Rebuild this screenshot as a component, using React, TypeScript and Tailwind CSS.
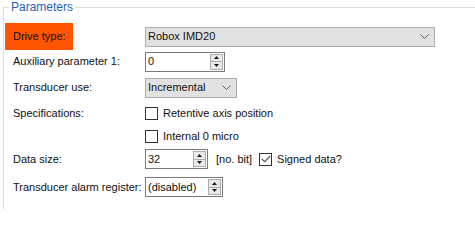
import React from "react";

function Chevron() {
  return (
    <svg width="9" height="5" viewBox="0 0 9 5" className="shrink-0">
      <path d="M0.5 0.5 L4.5 4.5 L8.5 0.5" fill="none" stroke="#606060" strokeWidth="1" />
    </svg>
  );
}

function Combo({ value, width }: { value: string; width: string }) {
  return (
    <div
      className={`flex h-[20px] items-center justify-between border border-[#adadad] bg-[#e1e1e1] pl-[2px] pr-[5px] ${width}`}
    >
      <span>{value}</span>
      <Chevron />
    </div>
  );
}

function Spin({ value, width }: { value: string; width: string }) {
  return (
    <div
      className={`flex h-[20px] items-center justify-between border border-[#7a7a7a] bg-white pl-[2px] pr-[1px] ${width}`}
    >
      <span>{value}</span>
      <div className="flex h-[16px] w-[13px] flex-col border border-[#adadad] bg-[#e9e9e9]">
        <div className="flex flex-1 items-center justify-center border-b border-[#adadad]">
          <svg width="5" height="3" viewBox="0 0 5 3">
            <path d="M2.5 0 L5 3 L0 3 Z" fill="#1a1a1a" />
          </svg>
        </div>
        <div className="flex flex-1 items-center justify-center">
          <svg width="5" height="3" viewBox="0 0 5 3">
            <path d="M0 0 L5 0 L2.5 3 Z" fill="#1a1a1a" />
          </svg>
        </div>
      </div>
    </div>
  );
}

function Check({ checked, label }: { checked?: boolean; label: string }) {
  return (
    <div className="flex items-center gap-[5px]">
      <div className="flex h-[13px] w-[13px] items-center justify-center border border-[#333333] bg-white">
        {checked && (
          <svg width="10" height="8" viewBox="0 0 10 8">
            <path d="M0.8 3.8 L3.6 6.6 L9.2 1" fill="none" stroke="#555555" strokeWidth="1.2" />
          </svg>
        )}
      </div>
      <span>{label}</span>
    </div>
  );
}

function Row({ label, h, children }: { label: string; h: string; children: React.ReactNode }) {
  return (
    <div className={`flex items-center ${h}`}>
      <div className="w-[141px] pl-[9px]">{label}</div>
      {children}
    </div>
  );
}

export default function App() {
  return (
    <div className="h-[209px] w-[475px] overflow-hidden bg-white pl-[3px] pt-[7px] font-['Liberation_Sans',Arial,sans-serif] text-[11px] text-[#111]">
      <div className="relative h-[220px] w-[490px] border-l border-t border-[#dcdcdc]">
        <span className="absolute -top-[8px] left-[5px] bg-white px-[2px] leading-[14px] text-[12px] text-[#1e5fbf]">
          Parameters
        </span>

        <div className="mt-[15px] flex h-[27px] items-center">
          <div className="ml-[1px] flex h-[27px] w-[68px] items-center bg-[#ff5500] pl-[8px]">
            Drive type:
          </div>
          <div className="ml-[72px]">
            <Combo value="Robox IMD20" width="w-[290px]" />
          </div>
        </div>

        <Row label="Auxiliary parameter 1:" h="h-[23px]">
          <Spin value="0" width="w-[80px]" />
        </Row>

        <Row label="Transducer use:" h="h-[29px]">
          <Combo value="Incremental" width="w-[92px]" />
        </Row>

        <Row label="Specifications:" h="h-[23px]">
          <Check label="Retentive axis position" />
        </Row>

        <Row label="" h="h-[23px]">
          <Check label="Internal 0 micro" />
        </Row>

        <Row label="Data size:" h="h-[22px]">
          <Spin value="32" width="w-[63px]" />
          <span className="ml-[8px]">[no. bit]</span>
          <div className="ml-[7px]">
            <Check checked label="Signed data?" />
          </div>
        </Row>

        <Row label="Transducer alarm register:" h="h-[34px]">
          <Spin value="(disabled)" width="w-[78px]" />
        </Row>
      </div>
    </div>
  );
}
